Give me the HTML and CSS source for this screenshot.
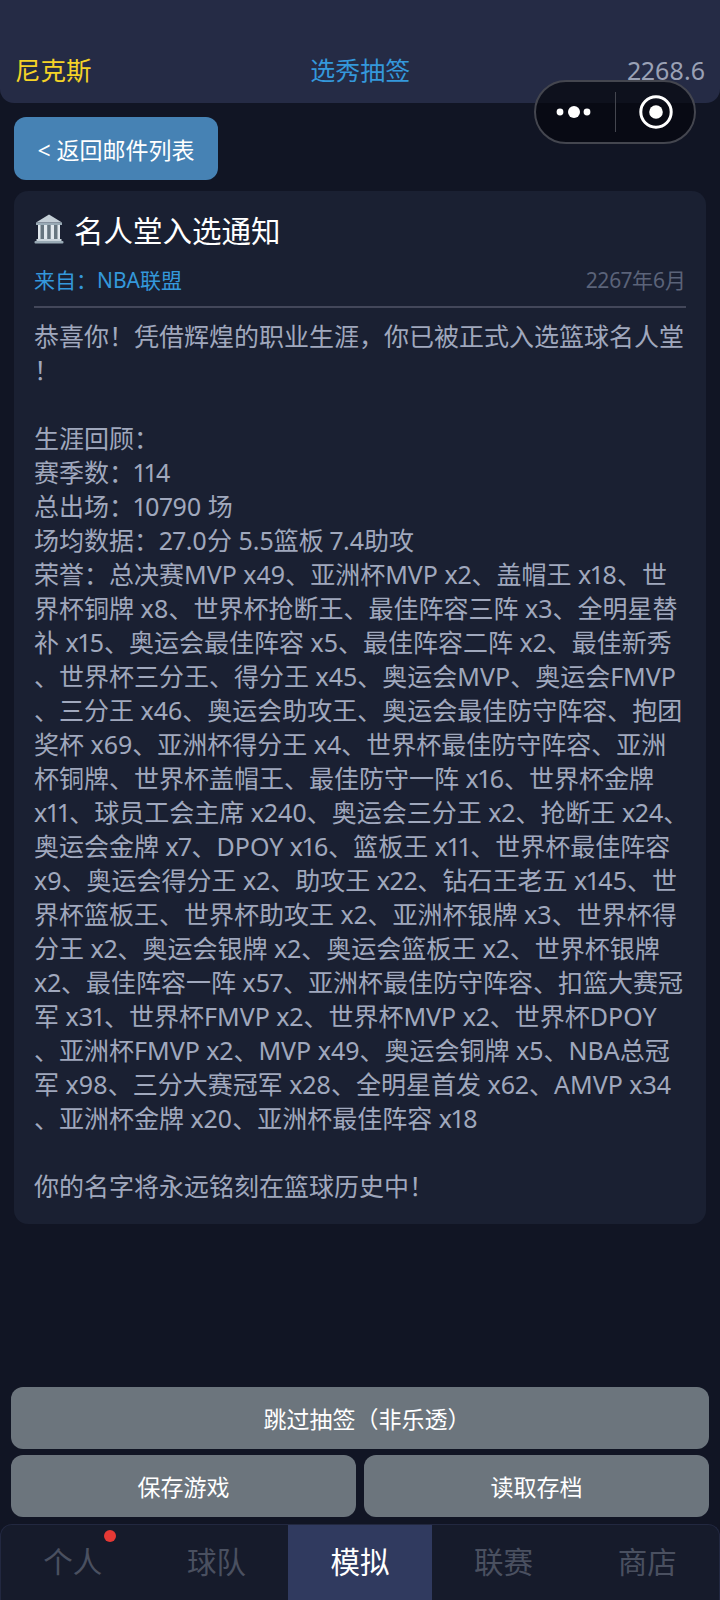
FILE: index.html
```html
<!DOCTYPE html>
<html>

<head>
    <title>名人堂入选通知</title>
    <link rel="stylesheet" href="styles.css">
</head>

<body>
    <div class="header">
        <div class="team">尼克斯</div>
        <div class="page-title">选秀抽签</div>
        <div class="money">2268.6</div>
    </div>

    <div class="capsule">
        <svg class="capsule-dots" width="56" height="24" viewBox="0 0 56 24">
            <circle cx="12" cy="12" r="3.4" fill="#fff"/>
            <circle cx="26" cy="12" r="6" fill="#fff"/>
            <circle cx="39" cy="12" r="3.4" fill="#fff"/>
        </svg>
        <div class="capsule-line"></div>
        <svg class="capsule-target" width="40" height="40" viewBox="0 0 40 40">
            <circle cx="20" cy="20" r="15.2" fill="none" stroke="#fff" stroke-width="3"/>
            <circle cx="20" cy="20" r="6.8" fill="#fff"/>
        </svg>
    </div>

    <div class="main">
        <button class="back-btn">&lt; 返回邮件列表</button>

        <div class="mail">
            <div class="mail-title">
                <svg width="30" height="30" viewBox="0 0 30 30">
                    <path d="M15 0.5L28 8.5H2Z" fill="#c3ced6"/>
                    <rect x="2" y="8.5" width="26" height="2.5" fill="#99aab5"/>
                    <rect x="4" y="11" width="22" height="14" fill="#e1e8ed"/>
                    <rect x="6.5" y="11" width="3.5" height="14" fill="#66757f"/>
                    <rect x="13.2" y="11" width="3.5" height="14" fill="#66757f"/>
                    <rect x="20" y="11" width="3.5" height="14" fill="#66757f"/>
                    <rect x="2.5" y="25" width="25" height="2" fill="#ccd6dd"/>
                    <rect x="0.5" y="27" width="29" height="2.5" rx="1" fill="#99aab5"/>
                </svg>
                <span>名人堂入选通知</span>
            </div>
            <div class="mail-meta">
                <span class="mail-from">来自：NBA联盟</span>
                <span class="mail-date">2267年6月</span>
            </div>
            <div class="mail-body">恭喜你！凭借辉煌的职业生涯，你已被正式入选篮球名人堂
！

生涯回顾：
赛季数：114
总出场：10790 场
场均数据：27.0分 5.5篮板 7.4助攻
荣誉：总决赛MVP x49、亚洲杯MVP x2、盖帽王 x18、世
界杯铜牌 x8、世界杯抢断王、最佳阵容三阵 x3、全明星替
补 x15、奥运会最佳阵容 x5、最佳阵容二阵 x2、最佳新秀
、世界杯三分王、得分王 x45、奥运会MVP、奥运会FMVP
、三分王 x46、奥运会助攻王、奥运会最佳防守阵容、抱团
奖杯 x69、亚洲杯得分王 x4、世界杯最佳防守阵容、亚洲
杯铜牌、世界杯盖帽王、最佳防守一阵 x16、世界杯金牌
x11、球员工会主席 x240、奥运会三分王 x2、抢断王 x24、
奥运会金牌 x7、DPOY x16、篮板王 x11、世界杯最佳阵容
x9、奥运会得分王 x2、助攻王 x22、钻石王老五 x145、世
界杯篮板王、世界杯助攻王 x2、亚洲杯银牌 x3、世界杯得
分王 x2、奥运会银牌 x2、奥运会篮板王 x2、世界杯银牌
x2、最佳阵容一阵 x57、亚洲杯最佳防守阵容、扣篮大赛冠
军 x31、世界杯FMVP x2、世界杯MVP x2、世界杯DPOY
、亚洲杯FMVP x2、MVP x49、奥运会铜牌 x5、NBA总冠
军 x98、三分大赛冠军 x28、全明星首发 x62、AMVP x34
、亚洲杯金牌 x20、亚洲杯最佳阵容 x18

你的名字将永远铭刻在篮球历史中！</div>
        </div>
    </div>

    <div class="actions">
        <button class="action-btn wide">跳过抽签（非乐透）</button>
        <button class="action-btn">保存游戏</button>
        <button class="action-btn">读取存档</button>
    </div>

    <div class="tabbar">
        <div class="tab">个人<span class="dot"></span></div>
        <div class="tab">球队</div>
        <div class="tab active">模拟</div>
        <div class="tab">联赛</div>
        <div class="tab">商店</div>
    </div>
</body>

</html>
```
FILE: styles.css
```css
* {
    box-sizing: border-box;
}

body {
    margin: 0;
    height: 1600px;
    display: flex;
    flex-direction: column;
    background-color: #111524;
    font-family: "Noto Sans", "Noto Sans CJK SC", sans-serif;
    font-variant-numeric: proportional-nums;
    overflow: hidden;
}

.header {
    height: 103px;
    padding: 52px 15px 0;
    display: flex;
    justify-content: space-between;
    background-color: #252b45;
    border-radius: 0 0 14px 14px;
    font-size: 25px;
    line-height: 36px;
}

.team {
    color: #f5d327;
    font-size: 25.5px;
}

.page-title {
    color: #3498db;
    margin-left: 2px;
}

.money {
    color: #9aa1b5;
}

.capsule {
    position: absolute;
    left: 534px;
    top: 80px;
    width: 162px;
    height: 64px;
    display: flex;
    align-items: center;
    padding-left: 12px;
    background-color: rgba(5, 7, 14, 0.72);
    border: 2px solid #44464f;
    border-radius: 32px;
}

.capsule-line {
    width: 1px;
    height: 40px;
    margin-left: 11px;
    background-color: #44464f;
}

.capsule-target {
    margin-left: 20px;
}

.main {
    flex: 1;
    padding: 14px 14px 0;
}

.back-btn {
    display: block;
    width: 204px;
    height: 63px;
    padding: 0;
    font-family: inherit;
    font-size: 23px;
    color: #fff;
    background-color: #4682b4;
    border: none;
    border-radius: 12px;
}

.mail {
    margin-top: 11px;
    height: 1033px;
    padding: 17px 20px 0;
    background-color: #1a2032;
    border-radius: 14px;
}

.mail-title {
    display: flex;
    align-items: center;
    gap: 10px;
    height: 42px;
    font-size: 29.5px;
    color: #fff;
}

.mail-meta {
    display: flex;
    justify-content: space-between;
    margin-top: 15px;
    padding-bottom: 11px;
    border-bottom: 2px solid #43475a;
    font-size: 21px;
    line-height: 30px;
}

.mail-from {
    color: #3498db;
}

.mail-date {
    color: #5b6379;
}

.mail-body {
    margin-top: 11px;
    white-space: pre;
    font-size: 25px;
    line-height: 34px;
    color: #a0a8bd;
}

.actions {
    display: grid;
    grid-template-columns: 1fr 1fr;
    column-gap: 8px;
    row-gap: 6px;
    padding: 0 11px;
}

.action-btn {
    height: 62px;
    padding: 0;
    font-family: inherit;
    font-size: 23px;
    color: #fff;
    background-color: #6c757d;
    border: none;
    border-radius: 12px;
}

.action-btn.wide {
    grid-column: 1 / 3;
    padding-left: 14px;
}

.tabbar {
    margin-top: 7px;
    height: 76px;
    display: flex;
    background-color: #161b2b;
    border: 1px solid #222840;
    border-bottom: none;
    border-radius: 12px 12px 0 0;
    overflow: hidden;
}

.tab {
    position: relative;
    flex: 1;
    display: flex;
    align-items: center;
    justify-content: center;
    padding-bottom: 4px;
    font-size: 29.5px;
    color: #4a5060;
}

.tab.active {
    color: #fff;
    background-color: #303a5f;
}

.dot {
    position: absolute;
    left: 103px;
    top: 5px;
    width: 12px;
    height: 12px;
    background-color: #e53935;
    border-radius: 50%;
}
```
